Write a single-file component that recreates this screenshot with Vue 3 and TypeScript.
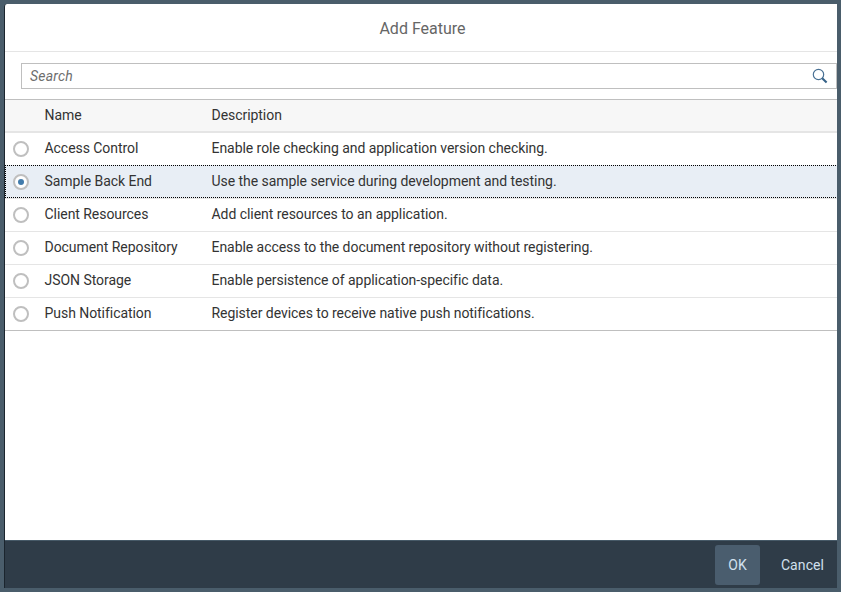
<script setup lang="ts">
import { ref } from 'vue'

interface Feature {
  name: string
  description: string
}

const features: Feature[] = [
  { name: 'Access Control', description: 'Enable role checking and application version checking.' },
  { name: 'Sample Back End', description: 'Use the sample service during development and testing.' },
  { name: 'Client Resources', description: 'Add client resources to an application.' },
  { name: 'Document Repository', description: 'Enable access to the document repository without registering.' },
  { name: 'JSON Storage', description: 'Enable persistence of application-specific data.' },
  { name: 'Push Notification', description: 'Register devices to receive native push notifications.' },
]

const selected = ref(1)
</script>

<template>
  <div class="backdrop">
    <section class="dialog" role="dialog">
      <header class="title">Add Feature</header>
      <div class="search">
        <span class="placeholder">Search</span>
        <svg class="magnifier" width="16" height="16" viewBox="0 0 16 16">
          <circle cx="6.5" cy="6.5" r="5.2" fill="none" stroke="#4a7194" stroke-width="1.2" />
          <path d="M10.2 10.2 L14.6 14.4" stroke="#346187" stroke-width="2.1" fill="none" />
        </svg>
      </div>
      <div class="table">
        <div class="row head">
          <span></span>
          <span>Name</span>
          <span>Description</span>
        </div>
        <div
          v-for="(feature, index) in features"
          :key="feature.name"
          class="row item"
          :class="{ selected: index === selected }"
          @click="selected = index"
        >
          <span class="radio"></span>
          <span>{{ feature.name }}</span>
          <span>{{ feature.description }}</span>
        </div>
      </div>
      <footer class="footer">
        <button class="button primary">OK</button>
        <button class="button">Cancel</button>
      </footer>
    </section>
  </div>
</template>

<style>
body {
  background: #4a5d6b;
  overflow: hidden;
}
</style>

<style scoped>
.backdrop {
  box-sizing: border-box;
  width: 841px;
  height: 592px;
  padding: 4px;
  background: #4a5d6b;
  font-family: Roboto, "Liberation Sans", sans-serif;
  font-size: 14px;
  color: #333;
}
.dialog {
  box-sizing: border-box;
  width: 833px;
  height: 584px;
  display: flex;
  flex-direction: column;
  background: #fff;
  border-left: 1px solid #1b252e;
  border-top-left-radius: 3px;
  overflow: hidden;
}
.title {
  box-sizing: border-box;
  height: 48px;
  padding: 1px 0 0 3px;
  line-height: 47px;
  text-align: center;
  font-size: 16px;
  color: #666;
  border-bottom: 1px solid #e5e5e5;
}
.search {
  box-sizing: border-box;
  height: 26px;
  margin: 11px 0 10px 16px;
  padding: 0 8px;
  display: flex;
  align-items: center;
  justify-content: space-between;
  border: 1px solid #bfbfbf;
}
.placeholder {
  font-style: italic;
  letter-spacing: 0.2px;
  color: #6e6e6e;
}
.row {
  box-sizing: border-box;
  height: 33px;
  display: grid;
  grid-template-columns: 39.5px 167px 1fr;
  align-items: center;
  letter-spacing: -0.05px;
  line-height: 30px;
  border-bottom: 1px solid #e5e5e5;
}
.row > span:not(.radio) {
  padding-bottom: 2px;
}
.head {
  height: 34px;
  line-height: 31px;
  background: #f7f7f7;
  border-top: 1px solid #bfbfbf;
  border-bottom: 2px solid #e5e5e5;
}
.row.head > span {
  padding-bottom: 0;
}
.item:last-child {
  border-bottom-color: #bfbfbf;
}
.selected {
  height: 33px;
  margin: -1px -1px 1px 0;
  padding-top: 1px;
  border-bottom: 0;
  background: #e8eef5;
  outline: 1px dotted #000;
  outline-offset: -1px;
  box-shadow: 0 1px #e5e5e5;
}
.radio {
  box-sizing: border-box;
  width: 16px;
  height: 16px;
  margin-left: 8px;
  display: grid;
  place-items: center;
  border: 2px solid #bfbfbf;
  border-radius: 50%;
  background: #fff;
}
.selected .radio::after {
  content: "";
  width: 6px;
  height: 6px;
  border-radius: 50%;
  background: #427cac;
}
.footer {
  box-sizing: border-box;
  height: 48px;
  margin-top: auto;
  padding: 4px 0 3px;
  display: flex;
  justify-content: flex-end;
  gap: 8px;
  background: #2f3c48;
  border-top: 1px solid #465967;
}
.button {
  box-sizing: border-box;
  width: 69px;
  height: 40px;
  padding: 0;
  border: 0;
  border-radius: 3px;
  background: transparent;
  color: #d1e0ee;
  font: 14px Roboto, "Liberation Sans", sans-serif;
  letter-spacing: 0.1px;
}
.primary {
  width: 45px;
  background: #4a5d6e;
}
</style>
